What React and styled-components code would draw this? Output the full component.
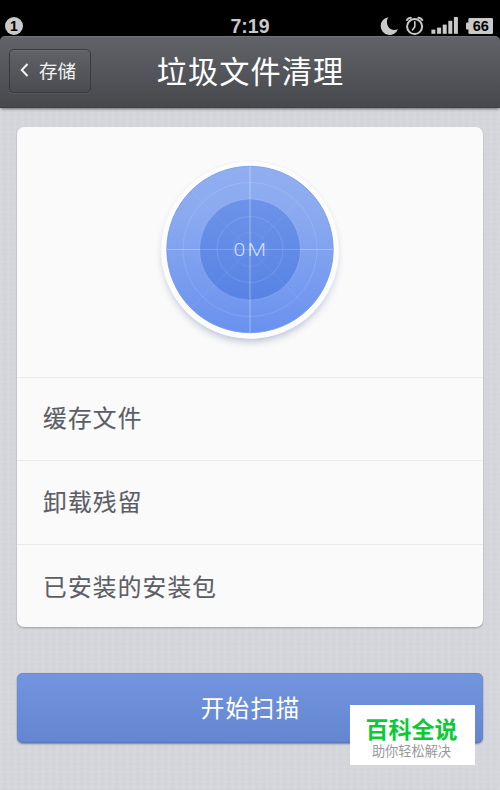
import React from "react";
import styled, { createGlobalStyle } from "styled-components";

const rows = ["缓存文件", "卸载残留", "已安装的安装包"];

const StatusIcons = () => (
  <svg width="120" height="20" viewBox="0 0 120 20" fill="#c9c9c9">
    <path d="M8.4 1.2 A8.9 8.9 0 1 0 18 13 C14.5 15.2 9.8 13.8 8 10.2 C6.4 7 6.6 3.8 8.4 1.2 Z" />
    <g fill="none" stroke="#c9c9c9" strokeLinecap="round">
      <circle cx="34.6" cy="10.6" r="7.5" strokeWidth="2" />
      <path d="M34.8 5.8 V10.8 L32.6 13.8" strokeWidth="1.6" />
      <path d="M26.9 3.9 Q28.3 1.6 30.8 1.7" strokeWidth="2" />
      <path d="M38.4 1.7 Q40.9 1.6 42.3 3.9" strokeWidth="2" />
    </g>
    <rect x="51.4" y="13.6" width="4" height="4.2" />
    <rect x="57.1" y="11.6" width="4" height="6.2" />
    <rect x="62.7" y="8.6" width="4" height="9.2" />
    <rect x="68.3" y="4.8" width="4" height="13" />
    <rect x="73.9" y="1" width="4" height="16.8" />
    <rect x="86" y="6.6" width="4" height="7" rx="1" />
    <rect x="88.4" y="2" width="24.6" height="16" rx="1.2" />
    <text
      x="100.8"
      y="15.2"
      textAnchor="middle"
      fill="#000"
      fontSize="14.5"
      fontWeight="bold"
      fontFamily="'Liberation Sans', sans-serif"
    >
      66
    </text>
  </svg>
);

const Radar = () => (
  <svg width="200" height="210" viewBox="-100 -100.5 200 210">
    <defs>
      <linearGradient id="outer" x1="0" y1="0" x2="0" y2="1">
        <stop offset="0" stopColor="#91aef0" />
        <stop offset="0.3" stopColor="#8aa9f0" />
        <stop offset="1" stopColor="#6991ee" />
      </linearGradient>
      <linearGradient id="inner" x1="0" y1="0" x2="0" y2="1">
        <stop offset="0" stopColor="#6c93e8" />
        <stop offset="1" stopColor="#5883e4" />
      </linearGradient>
      <filter id="shade" x="-20%" y="-20%" width="140%" height="140%">
        <feGaussianBlur stdDeviation="4.5" />
      </filter>
    </defs>
    <circle cy="5.5" r="86" fill="#536795" opacity="0.45" filter="url(#shade)" />
    <circle r="89.3" fill="#f3f3f4" />
    <circle cy="0.4" r="88.6" fill="#fcfcfc" />
    <circle r="83.2" fill="url(#outer)" stroke="#6f96ea" strokeWidth="0.8" />
    <circle r="50.5" fill="url(#inner)" />
    <g fill="none" stroke="#fff">
      <circle r="67" opacity="0.13" />
      <circle r="50.5" opacity="0.17" />
      <circle r="33" opacity="0.13" />
      <circle r="17" opacity="0.07" />
      <path d="M-58 -58 L58 58 M58 -58 L-58 58" opacity="0.07" />
      <path d="M-83 0 H-50 M50 0 H83" opacity="0.3" />
      <path d="M-50 0 H50" opacity="0.18" />
      <path d="M0 -83 V83" strokeWidth="1.8" opacity="0.2" />
    </g>
    <text
      x="-16.6"
      y="6.5"
      fill="#d4e0fb"
      fontSize="18.5"
      fontWeight="300"
      letterSpacing="2"
      textLength="35"
      lengthAdjust="spacingAndGlyphs"
      fontFamily="Roboto, sans-serif"
    >
      0M
    </text>
  </svg>
);

const App = () => {
  return (
    <>
      <GlobalStyle />
      <Screen>
        <StatusBar>
          <Notice>
            <svg width="18" height="18" viewBox="0 0 18 18">
              <circle cx="9" cy="9" r="9" fill="#c9c9c9" />
              <text
                x="8.8"
                y="14"
                textAnchor="middle"
                fontSize="14"
                fontWeight="bold"
                fontFamily="'Liberation Sans', sans-serif"
              >
                1
              </text>
            </svg>
          </Notice>
          <Clock>7:19</Clock>
          <StatusIcons />
        </StatusBar>
        <Header>
          <BackBtn>
            <svg width="9" height="14" viewBox="0 0 9 14">
              <path
                d="M7.5 1 L1.8 7 L7.5 13"
                fill="none"
                stroke="#f2f2f2"
                strokeWidth="2"
              />
            </svg>
            <span>存储</span>
          </BackBtn>
          <Title>垃圾文件清理</Title>
        </Header>
        <Content>
          <Card>
            <RadarBox>
              <Radar />
            </RadarBox>
            {rows.map((row, index) => (
              <Row key={index} $last={index === rows.length - 1}>
                {row}
              </Row>
            ))}
          </Card>
          <ScanBtn>开始扫描</ScanBtn>
        </Content>
        <Badge>
          <BadgeTitle>百科全说</BadgeTitle>
          <BadgeText>助你轻松解决</BadgeText>
        </Badge>
      </Screen>
    </>
  );
};

const GlobalStyle = createGlobalStyle`
  * {
    box-sizing: border-box;
  }

  body {
    margin: 0;
    background: #000;
    font-family: "Liberation Sans", "Noto Sans CJK SC", sans-serif;
  }
`;

const Screen = styled.div`
  position: relative;
  display: flex;
  flex-direction: column;
  width: 500px;
  height: 790px;
  overflow: hidden;
`;

const StatusBar = styled.div`
  display: grid;
  grid-template-columns: 120px 1fr 120px;
  align-items: end;
  height: 36px;
  background: #000;
`;

const Notice = styled.div`
  display: flex;
  padding: 0 0 1px 5px;
`;

const Clock = styled.div`
  color: #c9c9c9;
  font-size: 19.5px;
  font-weight: bold;
  line-height: 20px;
  text-align: center;
`;

const Header = styled.div`
  display: grid;
  grid-template-columns: 92px 1fr 92px;
  align-items: center;
  height: 72px;
  flex-shrink: 0;
  z-index: 1;
  border-top: 1px solid #707276;
  border-bottom: 1px solid #3f4044;
  border-radius: 5px 5px 0 0;
  background: linear-gradient(#616369, #47484c);
  box-shadow: 0 2px 3px -1px rgba(0, 0, 0, 0.5);
`;

const BackBtn = styled.button`
  display: flex;
  align-items: center;
  gap: 10px;
  width: 82px;
  height: 44px;
  margin: 0 0 2px 9px;
  padding: 0 0 2px 10px;
  border: 1px solid #37393d;
  border-radius: 5px;
  background: linear-gradient(#606267, #4b4c50);
  box-shadow: inset 0 1px 0 #6c6e73, 0 1px 0 rgba(255, 255, 255, 0.07);
  color: #f4f4f4;
  font-family: inherit;
  font-size: 18.5px;
`;

const Title = styled.div`
  color: #fff;
  font-size: 30.2px;
  letter-spacing: 1.1px;
  line-height: 40px;
  padding-top: 1px;
  text-align: center;
  text-indent: 1px;
  white-space: nowrap;
`;

const Content = styled.div`
  display: flex;
  flex-direction: column;
  flex: 1;
  padding: 19px 17px 0;
  background:
    repeating-linear-gradient(90deg, rgba(255, 255, 255, 0.06) 0 2px, transparent 3px 7px),
    repeating-linear-gradient(rgba(90, 95, 110, 0.015) 0 2px, transparent 3px 5px),
    #d5d6db;
`;

const Card = styled.div`
  height: 500px;
  border-radius: 7px;
  background: #fafafa;
  box-shadow: 0 1px 2px rgba(0, 0, 0, 0.28);
`;

const RadarBox = styled.div`
  display: flex;
  justify-content: center;
  height: 250px;
  padding-top: 22px;
`;

const Row = styled.div`
  display: flex;
  align-items: center;
  height: 83.4px;
  padding: ${(props) => (props.$last ? "0 0 0 26px" : "0 0 4px 26px")};
  border-top: 1px solid #ebebec;
  color: #5c5e66;
  font-size: 23.7px;
  letter-spacing: 1.2px;
  -webkit-text-stroke: 0.15px #5c5e66;
`;

const ScanBtn = styled.button`
  height: 70px;
  margin-top: 46px;
  padding: 0 0 2px 1px;
  border: none;
  border-radius: 6px;
  background: linear-gradient(#7395e0, #6485d0);
  box-shadow: inset 0 1px 0 #6f8bc9, inset 0 -1px 1px #5876bd,
    0 1px 2px rgba(0, 0, 0, 0.4);
  color: #fff;
  font-family: inherit;
  font-size: 23.7px;
  letter-spacing: 1.2px;
`;

const Badge = styled.div`
  position: absolute;
  z-index: 2;
  left: 350px;
  top: 705px;
  display: flex;
  flex-direction: column;
  align-items: center;
  width: 125px;
  height: 60px;
  padding: 11px 2px 0 0;
  background: #fff;
`;

const BadgeTitle = styled.div`
  color: #08cb35;
  font-size: 23px;
  font-weight: bold;
  line-height: 28px;
`;

const BadgeText = styled.div`
  color: #999;
  font-size: 13.2px;
  line-height: 15px;
`;

export default App;
